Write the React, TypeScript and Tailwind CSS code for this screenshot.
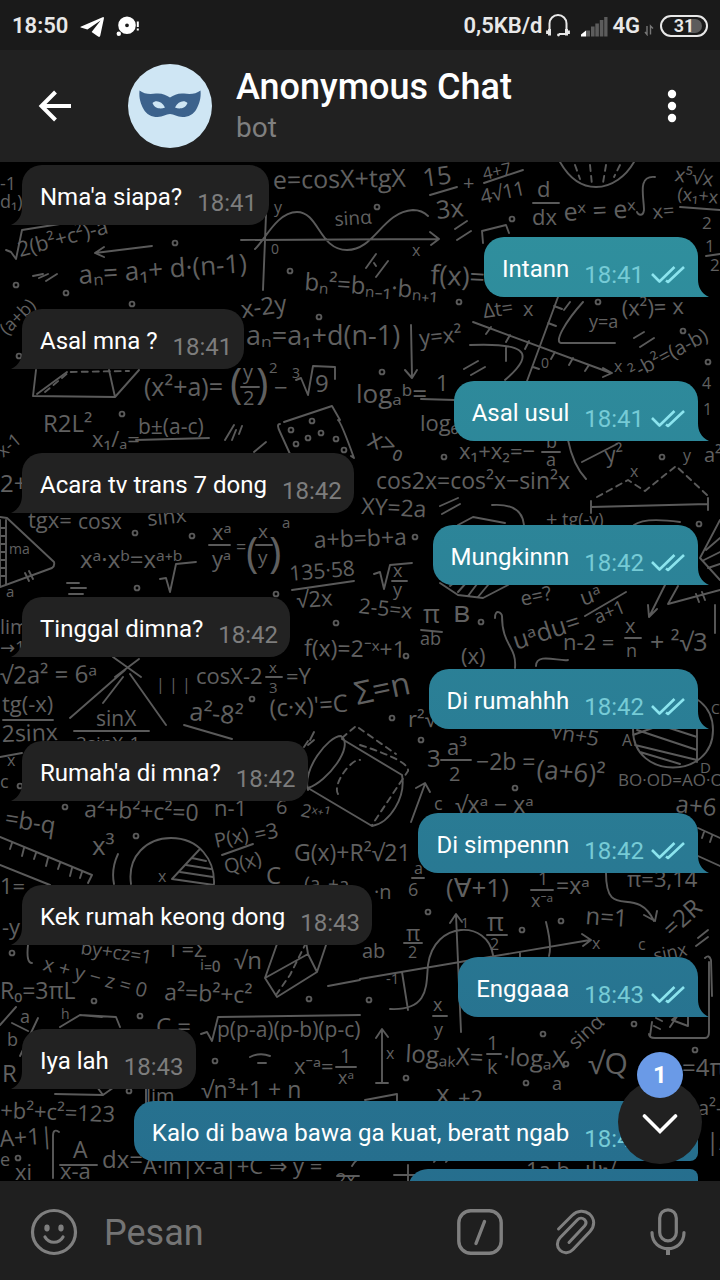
import React from "react";

type Message = { text: string; time: string; mine?: boolean; joined?: boolean };

const messages: Message[] = [
  { text: "Nma'a siapa?", time: "18:41" },
  { text: "Intann", time: "18:41", mine: true },
  { text: "Asal mna ?", time: "18:41" },
  { text: "Asal usul", time: "18:41", mine: true },
  { text: "Acara tv trans 7 dong", time: "18:42" },
  { text: "Mungkinnn", time: "18:42", mine: true },
  { text: "Tinggal dimna?", time: "18:42" },
  { text: "Di rumahhh", time: "18:42", mine: true },
  { text: "Rumah'a di mna?", time: "18:42" },
  { text: "Di simpennn", time: "18:42", mine: true },
  { text: "Kek rumah keong dong", time: "18:43" },
  { text: "Enggaaa", time: "18:43", mine: true },
  { text: "Iya lah", time: "18:43" },
  { text: "Kalo di bawa bawa ga kuat, beratt ngab", time: "18:43", mine: true, joined: true },
];

/* Chalk formulas of the wallpaper: text, x, baseline, size, rotation */
type Formula = [string, number, number, number, number?];

const formulas: Formula[] = [
  ["-1", 0, 190, 18], ["d₁)", 0, 208, 18],
  ["e=cosX+tgX", 273, 189, 25, -1], ["y", 274, 213, 16], ["sinα", 335, 226, 19, -4],
  ["0", 271, 254, 14], ["x", 412, 256, 16],
  ["2(b²+c²)-a²", 20, 257, 21, -15], ["aₙ= a₁+ d·(n-1)", 79, 284, 26, -4],
  ["bₙ²=bₙ₋₁·bₙ₊₁", 304, 290, 24, 4], ["x-2y", 242, 318, 24, -8], ["f(x)=", 430, 284, 27, 3],
  ["aₙ=a₁+d(n-1)", 246, 345, 27], ["y=x²", 420, 346, 22, -6], ["(a+b)", 7, 336, 18, -45],
  ["(x²+a)=", 144, 396, 25], ["(", 230, 398, 42], ["y", 243, 379, 20], ["2", 243, 405, 20], [")", 256, 398, 42],
  ["2", 269, 373, 15], ["−", 274, 396, 24], ["3", 292, 378, 14], ["9", 315, 392, 24],
  ["R2L²", 43, 432, 24], ["logₐᵇ=", 356, 403, 26], ["1", 436, 391, 22], ["log₆", 420, 431, 22],
  ["15", 424, 187, 25, -8], ["3x", 437, 219, 25, -6], ["+", 463, 190, 20], ["4+7", 484, 180, 17, -12],
  ["4√11", 482, 204, 20, -12], ["d", 537, 197, 22], ["dx", 532, 225, 22], ["eˣ = eˣ", 564, 221, 25, -3],
  ["x=", 653, 219, 20, -5], ["x⁵√x", 674, 181, 20, 8], ["(x₁+x", 677, 200, 18, 5], ["2", 702, 229, 17],
  ["1", 705, 252, 17], ["2", 710, 271, 17], ["Δt=", 484, 318, 20, -8], ["x", 523, 316, 20],
  ["0", 541, 368, 14], ["x", 614, 372, 16], ["y=a", 589, 328, 18], ["(x²)= x", 622, 316, 22, -2],
  ["²-b²=(a-b)", 634, 380, 20, -28], ["4", 702, 389, 16], ["1", 703, 415, 16],
  ["x₁/ₐ=", 92, 447, 22], ["b±(a-c)", 138, 434, 21], ["x-1", 3, 458, 18, -40], ["2+", 0, 492, 24],
  ["tgx=", 28, 528, 22], ["cosx", 78, 529, 21], ["sinx", 148, 526, 21, -6],
  ["ma", 9, 554, 14], ["a", 6, 597, 15], ["xᵃ·xᵇ=xᵃ⁺ᵇ", 80, 568, 24],
  ["xᵃ", 212, 540, 22], ["yᵃ", 212, 567, 22], ["=", 236, 553, 18], ["(", 246, 567, 42], ["x", 258, 538, 19],
  ["y", 258, 564, 19], [")", 269, 567, 42], ["a", 282, 528, 15], ["a+b=b+a", 314, 548, 23, -2],
  ["135·58", 290, 581, 21, -5], ["√2x", 297, 608, 22, -4], ["x", 393, 577, 18], ["y", 393, 596, 18],
  ["XY=2a", 361, 514, 23, 3], ["cos2x=cos²x−sin²x", 376, 489, 23], ["x₁+x₂=−", 459, 459, 22],
  ["a", 546, 466, 18], ["b", 546, 448, 18], ["x>₀", 366, 445, 26, 22], ["y²", 606, 463, 22, -8], ["x", 630, 477, 16],
  ["y", 683, 461, 16], ["a²", 704, 462, 20], ["+", 546, 526, 20], ["tg(-y)", 562, 526, 18],
  ["e=?", 522, 606, 20, -12], ["π", 423, 623, 26], ["ab", 420, 645, 18], ["в", 453, 622, 30],
  ["2-5=x", 358, 613, 21, 6], ["uᵃdu=", 516, 650, 25, -18], ["uᵃ", 583, 606, 22, -20], ["a+1", 597, 624, 19, -22],
  ["n-2 =", 563, 650, 22], ["x", 625, 633, 20], ["n", 626, 657, 18], ["+ ²√3", 650, 651, 25],
  ["f(x)=2⁻ˣ+1", 304, 656, 23, 1], ["lim", 0, 634, 20], ["→1", 0, 654, 18], ["√2a² = 6ᵃ", 0, 684, 24, -1],
  ["cosX-2", 196, 684, 22], ["x", 269, 673, 15], ["3", 269, 693, 15], ["=Y", 286, 684, 22],
  ["Σ=n", 357, 705, 32, -12], ["(x)", 461, 664, 22], ["| | |", 156, 690, 16], ["r²√", 408, 727, 22],
  ["tg(-x)", 2, 712, 22], ["2sinx", 2, 742, 23, -2], ["sinX", 96, 726, 21], ["2sinX-1", 76, 750, 19],
  ["a²-8²", 189, 720, 25, 5], ["(c·x)'=C", 270, 717, 24, -4], ["c", 0, 788, 18], ["x", 7, 766, 16],
  ["=b-q", 4, 826, 24, 9], ["a²+b²+c²=0", 84, 817, 23, 2], ["n-1", 214, 816, 22], ["6", 276, 814, 20],
  ["2ˣ⁺¹", 300, 816, 18, 12], ["x³", 92, 855, 26], ["x", 158, 882, 16], ["P(x)", 216, 848, 20, -12],
  ["Q(x)", 226, 874, 20, -14], ["=3", 256, 842, 21, -12], ["G(x)+R²√21", 294, 861, 23], ["(aₙ+aₙ", 304, 890, 19, 2],
  ["C", 266, 884, 24], ["1=", 0, 894, 22], ["-y", 2, 935, 22],
  ["3", 427, 767, 24], ["a³", 447, 755, 22], ["2", 449, 781, 20], ["−2b =", 476, 770, 23], ["(a+6)²", 536, 778, 26, 5],
  ["c", 434, 810, 18], ["√xᵃ − xᵃ", 455, 813, 23], ["√n+5", 550, 738, 21, 10], ["A", 622, 746, 16], ["C", 711, 714, 14],
  ["D", 700, 773, 15], ["BO·OD=AO·O", 618, 786, 17], ["a+6", 675, 812, 24, 6], ["a", 414, 874, 16], ["6", 408, 896, 18],
  ["·n", 374, 899, 20], ["(∀+1)", 446, 897, 26], ["1", 538, 885, 18], ["x⁻ᵃ", 531, 907, 18], ["=xᵃ", 556, 894, 23],
  ["π=3,14", 627, 887, 22], ["n=1", 585, 924, 24, 4], ["=2R", 672, 938, 24, -42],
  ["π", 406, 941, 22], ["π", 487, 931, 26], ["2", 490, 950, 16], ["ab", 362, 958, 20], ["2", 408, 958, 16],
  ["-1", 386, 984, 15], ["1", 461, 928, 14], ["x", 592, 949, 16], ["x", 433, 1011, 18], ["y", 434, 1036, 18],
  ["by+cz=1", 80, 954, 19, 8], ["x + y − z = 0", 42, 970, 20, 15], ["R₀=3πL", 0, 999, 23], ["a²=b²+c²", 164, 1000, 23, 2],
  ["Γ=Σ", 170, 957, 22], ["ᵢ₌₀", 200, 968, 24], ["√n", 234, 969, 24], ["a", 20, 1023, 18], ["b", 7, 1046, 18],
  ["R", 2, 1082, 24], ["h", 61, 1019, 14], ["C =", 156, 1035, 24], ["p(p-a)(p-b)(p-c)", 217, 1037, 21],
  ["x⁻ᵃ=", 294, 1074, 22], ["1", 340, 1063, 20], ["xᵃ", 338, 1084, 18], ["√n³+1 + n", 201, 1098, 23],
  ["+b²+c²=123", 0, 1118, 22, 2], ["lim", 146, 1103, 20], ["A+1|", 0, 1147, 23, -4], ["A", 73, 1158, 23], ["x-a", 60, 1179, 22],
  ["dx=", 102, 1168, 24], ["A·ln|x-a|+C ⇒ y =", 143, 1174, 22], ["2x", 336, 1186, 18], ["xi", 15, 1180, 22],
  ["e", 0, 1166, 18], ["logₐₖX=", 405, 1062, 24, 3], ["1", 487, 1050, 20], ["k", 487, 1074, 20], ["·logₐX", 503, 1065, 24, 3],
  ["x", 386, 1059, 16], ["√Q", 588, 1074, 30], ["=4π", 682, 1076, 24], ["a²-", 698, 1115, 20], ["a", 552, 1090, 18],
  ["x", 436, 1103, 26], ["+2", 458, 1106, 22], ["sinα", 576, 1050, 20, -42], ["c", 638, 950, 16], ["sinx", 655, 962, 18, -12],
  ["|A", 706, 1150, 24], ["1a b", 526, 1178, 22], ["ψ√", 585, 1178, 24],
];

const chalk = [
  // square roots, fraction bars
  "M6 250l5 2 5 7 6-29L66 223M241 387h18M296 380l5-2 7 17 5-29 22 1 0 12M421 399l34 1M430 195l27-8M484 183l39-13M533 203h26M680 207l40 3M706 256l14-2",
  "M136 440l73-2M209 545h21M256 545h16M292 590l62-9M374 574l6-2 4 17 6-24 22-2M392 581h15M542 452h18M582 462l35-18M421 630l21 2M585 616l41-24M625 638h16M266 677h16",
  "M3 720h50M74 731h75M184 725l48 14M441 760h30M222 855l31-11M531 890h22M487 935h20M404 943h18M412 878h12M12 1023l16 8M60 1165h37M201 1034l6-2 5 9 6-24 142-2M336 1067h20M487 1054h14M433 1016h14M160 579l6-1 4 14 6-28 20-2M337 1176h22",
  // sine graph
  "M266 215l-3 75M241 240l197-1M430 232l9 7-8 6M255 249c10-9 22-37 42-37 22 0 22 38 50 38s35-38 66-40q9 0 15 6",
  "M152 246l-57 7M104 247l-9 6 9 4M33 276l10-2M39 278l9-4M46 281l11-7M411 325l1 51M405 370l7 8 5-8",
  "M366 268l10-14M376 277l12-16M374 263l2 3M455 229l12-8M457 240l14-9M483 243l-1-12 24-6 3 8M464 369l14-8M471 375l14-8M634 338l10-6M640 347l14-9",
  // cartesian crosses
  "M473 322l138 51M603 368l9 5-9 4M558 297l-31 84M491 327l-5 7M510 335l-4 7M529 341l-4 8M555 352l-4 7M573 358l-4 7M589 365l-4 6M548 323l8 3M554 306l8 3M533 367l6 2",
  "M583 302c-18 20-29 40-22 41h54M570 302l-6 8M470 345c50-2 70 5 35 35M506 347v14",
  "M560 162c8 14 20 25 36 25s30-11 38-25M655 177c-18-2-11 20-11 33-1 7-6 5-7 2",
  "M36 370l-3 26 82 1 24-27M109 370l6 27M37 394l30-22",
  // tablet of digits
  "M280 424q-4 0 0 8l10 22M338 420q3 2 16 38l-3-2M284 422l48-16 8 14M225 440l9-15M232 440l4-10M239 434l3-8M254 452l12-10",
  // triangles
  "M0 517l7 1 47 44q1 4-2 6L0 587M0 520v66M6 520v64M0 528h6M0 536h6M0 544h6M0 552h6M0 560h6M0 568h6M0 576h6M25 573l4 8M29 571l4 8M70 718l55-48M103 703l20-26M130 674l36 51M113 657l28 20M115 677l24-18",
  "M67 583h12M71 588h15M69 594h14M591 507l117-3M591 501v12M708 498v12M440 506l18-8M442 514l18-10M492 505q30-2 32 20M458 525l15-8 32 6M440 583l18 12 25 3 25-13M450 586l5-4M458 592l8-9M468 596l9-12M478 597l10-12M568 440q5 25 18 39M634 525q10-8 46-3",
  "M720 520l-20 38 20 22M706 550l14-12M704 560l16-8M708 568l12-4M665 585l-15 30M648 605l1 12 8-8M678 586l-10 18 52-14M696 594l3 8M702 592l3 8",
  "M495 618c0-10 7-5 7-2 0 30 15 30 13 52M536 666c0-14 24-4 32-6M715 605v28",
  // cylinder
  "M308 790c-6-20 20-54 33-54 14 10-14 46-33 52M342 739l60 36M308 788l64 38M402 775c4 22-12 48-30 51M310 740l4-8M304 747l4-6M411 822l14-38M416 788l9-5 5 9",
  // shaded circle, ruler and pie
  "M633 730c0 50 80 50 80 0 0-50-80-50-80 0M697 700v62M633 735l25-9M635 745l62 15M640 752l40 12M637 730l60 20M660 725l37 12",
  "M0 837l92 38-4 8M0 865l50 20M12 843l-2 6M24 848l-2 8M36 853l-2 6M48 858l-2 8M60 863l-2 6M72 868l-2 8M82 872l-2 6M118 854q-7 15-4 30M698 828l22 10M704 832l-2 6M712 836l-2 6M698 856l22 10",
  "M131 884c-4-28 16-46 40-46 28 0 44 22 43 46M199 850l-27 29M172 879l42 6M192 858l14 3M186 865l25 4M180 872l33 5M0 757l22-4M308 745l6-5",
  // unit circle
  "M456 915l5 117M450 923l6-9 6 8M360 979l230-39M582 934l9 6-8 6M390 1009c40 2 36-25 38-44 6-45 60-45 65-10M402 972l6 38M546 922q6 24 3 34M520 952v8M606 873c0 50 30 10 48 48M644 915l11 6 2-10M328 986l32-6",
  // solids
  "M265 978l12-34M265 978l12 19 40-25-9-18-43 24M317 972l10-30M308 954l-2-12M60 1027l20-12 36 2 4 10M80 1015l22 2M55 1094l48 1 14-10M103 1095l-6-8M0 1025l16-18M38 1018l-18 38M28 945q-2 18 4 18",
  "M146 1088v18M250 1057q10-5 20-1M258 1063h8M382 1030v53M376 1038l6-9 6 8M376 1083h12M365 1100l32-6v8M53 1178v-42q0-8 6-4M640 1000l10-22M712 996l-1-36q-2-6-6-2M672 1020l16-14v20zM650 1036l2-14",
  "M649 1034q0 4 6 4h50q4 0 4-6V962M654 1026l6 3M656 1018l6 3M670 1027l8-12M696 946l12-9M698 938l10-8M430 1175h-36M408 1165v16M422 1160l10-12M434 1162l12-14M446 1162l12-14M632 1175h20M352 1166q6-10 14-8",
];

const dashes = [
  "M597 497l31-17 17 11 31-25 31 29", "M360 745q50 16 48 26l-36 54", "M338 794c-6-10 14-36 22-34", "M342 738l14-12 40 28",
  "M575 165l5 14M590 165l2 20M606 165l-3 18M620 165l-6 12", "M45 392l24-20 60-1", "M276 995l14-20 20-40",
];

const dots: [number, number][] = [
  [175, 243], [290, 271], [132, 304], [319, 317], [16, 285], [66, 293], [459, 302], [377, 207], [512, 219], [598, 302], [683, 331],
  [708, 362], [382, 372], [122, 414], [643, 413], [19, 356], [135, 533], [192, 536], [137, 588], [276, 594], [415, 537], [444, 457],
  [662, 457], [699, 524], [481, 622], [406, 656], [336, 623], [252, 699], [392, 718], [421, 740], [515, 788], [65, 807], [136, 836],
  [20, 786], [428, 912], [561, 921], [522, 930], [369, 1000], [94, 1001], [140, 1016], [309, 999], [215, 1061], [543, 1034],
  [566, 1064], [526, 1083], [406, 1078], [634, 1024], [695, 1050], [18, 1158], [12, 953], [129, 1091], [291, 430], [308, 438],
  [321, 433], [296, 444], [336, 439], [344, 450], [312, 421],
];

function Wallpaper() {
  return (
    <svg
      aria-hidden="true"
      className="absolute inset-0 h-full w-full"
      viewBox="0 162 720 1019"
      preserveAspectRatio="xMidYMin slice"
      fill="none"
      stroke="#5a5a5a"
      strokeWidth="1.9"
      strokeLinecap="round"
      strokeLinejoin="round"
    >
      {chalk.map((d) => (
        <path key={d} d={d} />
      ))}
      {dashes.map((d) => (
        <path key={d} d={d} strokeDasharray="6 5" />
      ))}
      {dots.map(([x, y]) => (
        <circle key={`${x}-${y}`} cx={x} cy={y} r="2.4" />
      ))}
      <g fill="#606060" stroke="none" className="font-['Open_Sans','Noto_Sans','DejaVu_Sans',sans-serif]">
        {formulas.map(([text, x, y, size, turn = 0], i) => (
          <text key={i} x={x} y={y} fontSize={size} transform={`rotate(${turn} ${x} ${y})`}>
            {text}
          </text>
        ))}
      </g>
    </svg>
  );
}

function StatusBar() {
  return (
    <div className="flex h-[50px] shrink-0 items-center bg-[#1a1a1a] pl-3 pr-3 pt-px text-[22px] font-semibold text-[#e8e8e8]">
      <span>18:50</span>
      <svg className="ml-3 h-6 w-6" viewBox="0 0 24 24" fill="#fff">
        <path d="M.6 12.7 22.6 3.2q1.5-.5 1.3 1.2l-3.6 17.2q-.5 2-2.2 1L11.6 18l9-11.4L7.4 15.5.8 13.4q-.8-.3-.2-.7Z" />
      </svg>
      <svg className="ml-3 h-6 w-6" viewBox="0 0 24 24" fill="#fff">
        <path fillRule="evenodd" d="M11 2.5a8.8 8.8 0 1 1 0 17.6 8.8 8.8 0 0 1 0-17.6Zm0 6.9a1.9 1.9 0 1 0 0 3.8 1.9 1.9 0 0 0 0-3.8Z" />
        <circle cx="2.8" cy="19.8" r="2.2" />
        <path d="M20.8 7.5h2v5.5h-2zM20.8 14.5h2v2h-2z" />
      </svg>
      <span className="ml-auto">0,5KB/d</span>
      <svg className="ml-1 h-6 w-6" viewBox="0 0 24 24" fill="none" stroke="#e8e8e8" strokeWidth="2">
        <path d="M3.5 17v-7.5a8.5 8.5 0 0 1 17 0V17M21 20h-8" />
        <path d="M1.6 16.5V20M22.4 16.5V20M3.5 15v6.5M20.5 15v6.5" strokeWidth="3" />
        <circle cx="12.5" cy="21" r="1.4" fill="#e8e8e8" stroke="none" />
      </svg>
      <svg className="ml-2.5 h-6 w-7" viewBox="0 0 28 24" fill="#5c5c5c">
        <path d="M6 16.5h4v6H6zM11 12.5h3.6v10H11zM15.3 9.500h3.600v13h-3.600zM19.800 6h3.600v16.500h-3.600zM24.200 3h3.300v19.500h-3.300z" />
        <path d="M1 22.500v-2l5-4v6z" fill="#fff" />
      </svg>
      <span className="ml-1">4G</span>
      <svg className="ml-1 mt-2 h-3 w-2.5" viewBox="0 0 10 12" fill="none" stroke="#777" strokeWidth="1.400">
        <path d="M3 2v8.500L1 8M6.500 10.500V2L9 4.500" />
      </svg>
      <span className="relative ml-1.5 flex h-[22px] w-12 items-center justify-center overflow-hidden rounded-full border-2 border-[#e8e8e8] text-lg leading-none">
        <span className="absolute right-1 h-3.5 w-3.5 rounded-r-full bg-[#5c5c5c]" />
        <span className="relative">31</span>
      </span>
    </div>
  );
}

function Header() {
  return (
    <header className="flex h-28 shrink-0 items-center bg-[#212121] pl-8">
      <button type="button" aria-label="Kembali" className="flex h-12 w-12 items-center justify-center">
        <svg className="h-9 w-9" viewBox="0 0 36 36" fill="none" stroke="#fff" strokeWidth="4">
          <path d="M33 18H4.500M17.500 4 3.500 18l14 14" />
        </svg>
      </button>
      <svg className="ml-12 h-[84px] w-[84px]" viewBox="0 0 84 84" role="img" aria-label="Anonymous Chat">
        <circle cx="42" cy="42" r="42" fill="#cfe6f4" />
        <path
          fill="#3c628c"
          fillRule="evenodd"
          d="M11.500 26.500c4.500 3.500 10 4 16.500 3 6-.6 10 1.500 14 4 4-2.500 8-4.600 14-4 6.500 1 12 .5 16.500-3 .8 8-1.500 14-4 18.500-3 5.500-8 8-14 8-5.500 0-8.500-3-12.500-3s-7 3-12.500 3c-6 0-11-2.500-14-8-2.500-4.500-4.800-10.500-4-18.500ZM24.500 39c3.500-3.500 9.500-1.500 12.500 4.500-4.500 2-10.500 1-12.500-4.500Zm35 0c-3.500-3.500-9.500-1.500-12.500 4.500 4.500 2 10.500 1 12.500-4.500Z"
        />
      </svg>
      <div className="ml-6 min-w-0 pt-1">
        <h1 className="text-4xl font-medium leading-10 text-white">Anonymous Chat</h1>
        <p className="text-[28px] leading-[42px] text-[#7f7f7f]">bot</p>
      </div>
      <button type="button" aria-label="Menu" className="ml-auto mr-6 flex h-12 w-12 items-center justify-center">
        <svg className="h-9 w-3" viewBox="0 0 12 36" fill="#fff">
          <circle cx="6" cy="6" r="4.200" />
          <circle cx="6" cy="18" r="4.200" />
          <circle cx="6" cy="30" r="4.200" />
        </svg>
      </button>
    </header>
  );
}

function Bubble({ message }: { message: Message }) {
  if (!message.mine) {
    return (
      <li className="relative flex h-15 items-center self-start rounded-[20px] rounded-bl-none bg-[#222222] pl-[18px] pr-3">
        <span className="absolute bottom-0 -left-[11px] h-[18px] w-[11px] bg-[#222222] [clip-path:path('M11_0C11_8_8_14_0_18H11Z')]" />
        <span className="pt-[3px] text-white">{message.text}</span>
        <time className="ml-[15px] pt-4 text-[#7d7d7d]">{message.time}</time>
      </li>
    );
  }
  return (
    <li
      className={`relative flex h-15 items-center self-end rounded-[20px] bg-linear-to-b from-[#3297a1] to-[#256b8c] bg-fixed pl-[18px] pr-3 ${
        message.joined ? "rounded-br-lg" : "rounded-br-none"
      }`}
    >
      {!message.joined && (
        <span className="absolute bottom-0 -right-[11px] h-[18px] w-[11px] bg-linear-to-b from-[#3297a1] to-[#256b8c] bg-fixed [clip-path:path('M0_0C0_8_3_14_11_18H0Z')]" />
      )}
      <span className="pt-[3px] text-white">{message.text}</span>
      <time className="ml-[15px] pt-4 text-[#76cbd6]">{message.time}</time>
      <svg className="ml-1.5 mt-4 h-5 w-9" viewBox="0 0 36 20" fill="none" stroke="#8be4ee" strokeWidth="2.600">
        <path d="m2 9 7.500 7.500L24.500 2M16 15.500l2 1.500L34 2" strokeLinejoin="round" />
      </svg>
    </li>
  );
}

function Composer() {
  const iconButton = "flex h-14 w-14 shrink-0 items-center justify-center";
  return (
    <form className="flex h-[99px] shrink-0 items-center bg-[#1f1f1f] pl-[26px] pr-6 pt-0.5" onSubmit={(e) => e.preventDefault()}>
      <button type="button" aria-label="Emoji" className={iconButton}>
        <svg className="h-12 w-12" viewBox="0 0 48 48" fill="none" stroke="#7f7f7f" strokeWidth="3.200" strokeLinecap="round">
          <circle cx="24" cy="24" r="21.500" />
          <path d="M15 29c4 7 14 7 18 0" />
          <ellipse cx="17" cy="20" rx="2.700" ry="3.400" fill="#7f7f7f" stroke="none" />
          <ellipse cx="31" cy="20" rx="2.700" ry="3.400" fill="#7f7f7f" stroke="none" />
        </svg>
      </button>
      <input
        aria-label="Pesan"
        placeholder="Pesan"
        className="ml-[22px] min-w-0 flex-1 bg-transparent pt-0.5 text-4xl text-white outline-none placeholder:text-[#747474]"
      />
      <button type="button" aria-label="Perintah bot" className={iconButton}>
        <svg className="h-12 w-12" viewBox="0 0 48 48" fill="none" stroke="#7f7f7f" strokeWidth="3.400" strokeLinecap="round">
          <rect x="2.800" y="2.800" width="42.400" height="42.400" rx="12" />
          <path d="M28.500 13.500 20 35.500" />
        </svg>
      </button>
      <button type="button" aria-label="Lampirkan" className={`${iconButton} ml-10`}>
        <svg className="h-12 w-12" viewBox="0 0 48 48" fill="none" stroke="#7f7f7f" strokeWidth="3" strokeLinecap="round">
          <path d="M6.500 21 20 7.500C25.500 2 32.500 2 37.500 6c5.500 5 5.500 12 .5 17.500L21 41.500c-3.500 3.800-9.500 4.300-13 .8s-3.500-8.800 0-12.500l17.500-18c2-2 5-2 7-.2 1.800 2 1.800 4.500 0 6.500L17 34.500" />
        </svg>
      </button>
      <button type="button" aria-label="Pesan suara" className={`${iconButton} ml-9`}>
        <svg className="h-12 w-12" viewBox="0 0 48 48" fill="none" stroke="#7f7f7f" strokeWidth="3.200" strokeLinecap="round">
          <rect x="15.700" y="1.800" width="16.600" height="31" rx="8.300" />
          <path d="M8 24.500c0 21.500 32 21.500 32 0" />
          <path d="M24 41.500V47" strokeWidth="4" strokeLinecap="butt" />
        </svg>
      </button>
    </form>
  );
}

export default function App() {
  return (
    <div className="flex h-screen flex-col overflow-hidden bg-black font-[Roboto,'Liberation_Sans',sans-serif]">
      <StatusBar />
      <Header />
      <main className="relative min-h-0 flex-1 overflow-hidden bg-black">
        <Wallpaper />
        <ul className="relative flex flex-col gap-3 pt-[3px] pl-[22px] pr-[22px] text-2xl">
          {messages.map((m, i) => (
            <Bubble key={i} message={m} />
          ))}
          <li
            aria-hidden="true"
            className="-mt-1 h-15 w-[290px] self-end rounded-[20px] rounded-tr-lg bg-linear-to-b from-[#3297a1] to-[#256b8c] bg-fixed"
          />
        </ul>
        <button
          type="button"
          aria-label="Gulir ke bawah, 1 pesan baru"
          className="absolute bottom-[17px] right-[18px] flex h-[84px] w-[84px] items-center justify-center rounded-full bg-[#212121]"
        >
          <svg className="mt-1 h-6 w-9" viewBox="0 0 36 24" fill="none" stroke="#fff" strokeWidth="3.600" strokeLinecap="round">
            <path d="M2.500 4 18 19.500 33.500 4" />
          </svg>
          <span className="absolute -top-7 flex h-[46px] w-[46px] items-center justify-center rounded-full bg-[#6a9ae7] text-2xl font-bold text-white">
            1
          </span>
        </button>
      </main>
      <Composer />
    </div>
  );
}
